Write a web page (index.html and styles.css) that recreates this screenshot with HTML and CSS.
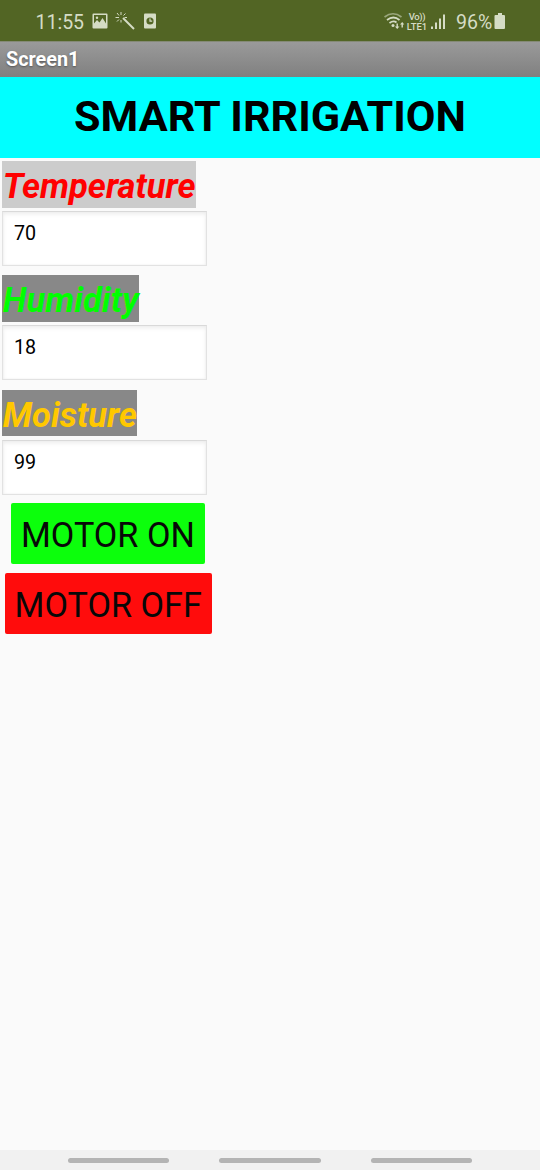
FILE: index.html
```html
<!DOCTYPE html>
<html lang="en">
<head>
<meta charset="utf-8">
<title>Screen1</title>
<link rel="stylesheet" href="styles.css">
</head>
<body>
<div class="phone">
  <header class="status">
    <span class="clock">11:55</span>
    <svg class="notices" width="68" height="21" viewBox="0 -.5 68 21">
      <path fill-rule="evenodd" d="M2.500 3h13a1 1 0 0 1 1 1v13a1 1 0 0 1-1 1h-13a1 1 0 0 1-1-1V4a1 1 0 0 1 1-1zm.5 1.500V15h12V4.500z"/>
      <path d="M3 13l3-3.500 2.500 2.500 3-4.500 3.500 5.500v3H3z"/><circle cx="6" cy="7.200" r="1.200"/>
      <path class="wand" d="M32 7.500L43 18.500"/>
      <path class="spark" d="M30 1.500v3M26 2.500l2 2.500M34.500 3l-2 2M28 7h-3.500M36 7h-2.500M28 9l-2 2M30 9.500v2.500"/>
      <path d="M54 3h10a1 1 0 0 1 1 1v13a1 1 0 0 1-1 1H54a1 1 0 0 1-1-1V4a1 1 0 0 1 1-1z"/>
      <circle class="face" cx="59" cy="10.500" r="3.600"/>
      <path class="hand" d="M59 8v2.700h2.200"/>
    </svg>
    <span class="spacer"></span>
    <svg class="wifi" width="22" height="21" viewBox="0 -.5 22 21">
      <path class="arc dim" d="M.5 6.500Q9 0 17.500 6.500"/>
      <path class="arc" d="M3 9.500Q9.500 4.500 15.500 9.500M5.500 12.500Q9.500 9.500 12.500 12"/>
      <circle cx="9" cy="15" r="1.500"/>
      <path d="M12.500 13h1.400v3h1.500L13.200 18.500 11 16h1.500zM17.500 17h1.400v-3h1.400L18.200 11.500 16 14h1.500z"/>
    </svg>
    <span class="volte"><span class="vo">Vo))</span><span>LTE1</span></span>
    <svg class="signal" width="16" height="21" viewBox="0 -.5 16 21">
      <path d="M0 16h2v2.500H0zM4 12h2v6.500H4zM8 8h2v10.500H8zM12 4h2v14.500h-2z"/>
    </svg>
    <span class="percent">96%</span>
    <svg class="battery" width="12" height="21" viewBox="0 -1 12 21">
      <path d="M4 2h4v2h2a1 1 0 0 1 1 1v12a1 1 0 0 1-1 1H1.500a1 1 0 0 1-1-1V5a1 1 0 0 1 1-1H4z"/>
    </svg>
  </header>
  <div class="titlebar">Screen1</div>
  <h1 class="banner"><span>SMART IRRIGATION</span></h1>
  <main class="content">
    <div class="label temperature">Temperature</div>
    <div class="field">70</div>
    <div class="label humidity">Humidity</div>
    <div class="field">18</div>
    <div class="label moisture">Moisture</div>
    <div class="field">99</div>
    <button class="motor on">MOTOR ON</button>
    <button class="motor off">MOTOR OFF</button>
  </main>
  <nav class="navbar"><span class="pill"></span><span class="pill"></span><span class="pill"></span></nav>
</div>
</body>
</html>
```
FILE: styles.css
```css
* { box-sizing: border-box; }
body { margin: 0; font-family: Roboto, sans-serif; background: #fafafa; }
.phone { width: 540px; height: 1170px; display: flex; flex-direction: column; overflow: hidden; }
.status { height: 41px; flex: none; background: #526524; color: #d5dcc5; display: flex; align-items: flex-start; padding: 10px 34px 0 35.500px; font-size: 19.500px; line-height: 26px; }
.status svg { fill: #d5dcc5; flex: none; }
.clock { width: 55px; }
.spacer { flex: 1; }
.wand { stroke: #d5dcc5; stroke-width: 2; }
.spark { stroke: #d5dcc5; stroke-width: 1; fill: none; }
.face { fill: #526524; }
.hand { stroke: #d5dcc5; stroke-width: 1.200; fill: none; }
.arc { stroke: #d5dcc5; stroke-width: 1.700; fill: none; }
.dim { opacity: .55; }
.wifi { margin-right: 1px; }
.volte { width: 24px; display: flex; flex-direction: column; align-items: center; font-size: 9.500px; line-height: 9.500px; padding: 2px 4px 0 0; font-weight: 500; }
.vo { letter-spacing: -.4px; }
.percent { margin-left: 9px; width: 38px; }
.titlebar { height: 36px; flex: none; background: linear-gradient(#9a9a9a, #808080); border-top: 1px solid #858a76; color: #fff; font-weight: 700; font-size: 19.800px; line-height: 35px; padding-left: 6px; text-shadow: 0 1px 2px #555; }
.banner { height: 81px; flex: none; margin: 0; background: #00ffff; color: #000; font-size: 43.100px; line-height: 79px; text-align: center; white-space: nowrap; }
.content { flex: 1; padding: 3px 2.400px; display: flex; flex-direction: column; align-items: flex-start; }
.label { height: 46.500px; font-size: 34.500px; line-height: 50px; font-weight: 700; font-style: italic; white-space: nowrap; text-indent: .4px; }
.temperature { width: 193.500px; background: #ccc; color: #f00; }
.humidity { width: 137px; background: #888; color: #0f0; }
.moisture { width: 135px; background: #888; color: #ffc800; }
.field { width: 205px; height: 55px; margin: 3.500px 0 9.400px; border: 1px solid #e2e2e2; border-top-color: #d9d9d9; background: #fff; box-shadow: inset 0 2px 4px #ececec, inset 0 0 2px #eee; font-size: 19.700px; line-height: 24px; padding: 10px 10.500px; color: #000; }
.motor { height: 61px; border: 0; border-radius: 2px; padding: 3px 0 0; font: 400 34.200px/58px Roboto, sans-serif; color: #080808; white-space: nowrap; }
.on { width: 194px; margin: -1px 0 9px 8.500px; background: #0cff0c; }
.off { width: 207px; margin-left: 2.300px; background: #ff0c0c; }
.navbar { height: 20px; flex: none; background: #f1f1f1; display: flex; justify-content: center; gap: 50px; padding-top: 8px; }
.pill { width: 101.500px; height: 4.500px; border-radius: 2.500px; background: #b4b4b4; }
```
